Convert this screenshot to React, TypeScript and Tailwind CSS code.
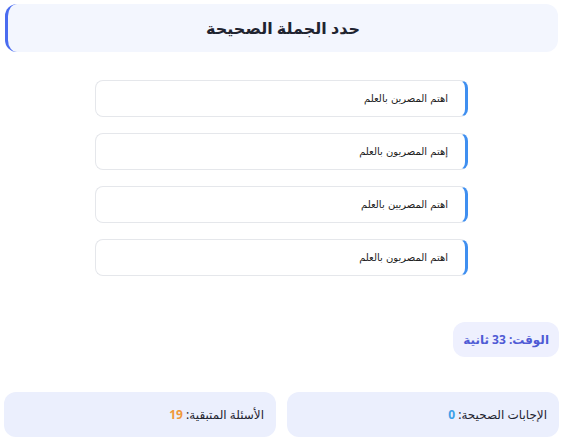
import React from "react";

const options = [
  "اهتم المصرين بالعلم",
  "إهتم المصريون بالعلم",
  "اهتم المصريين بالعلم",
  "اهتم المصريون بالعلم",
];

export default function App() {
  return (
    <div dir="rtl" className="w-[563px] h-[446px] bg-white flex flex-col" style={{ fontFamily: '"Noto Sans", "DejaVu Sans", sans-serif' }}>
      <div className="mx-[5px] mt-[4px] h-[48px] rounded-xl bg-[#f3f6fe] border-l-[3px] border-[#4a6cf0] flex items-center justify-center">
        <span className="text-[16px] font-bold text-[#1f2430]">حدد الجملة الصحيحة</span>
      </div>
      <div className="mt-[28px] mx-auto w-[373px] flex flex-col gap-[16px]">
        {options.map((o, i) => (
          <div key={i} className="h-[37px] rounded-lg border border-[#e5e7eb] border-r-[3px] border-r-[#3f8ff0] bg-white flex items-center pr-[17px]">
            <span className="text-[10px] text-[#222]" style={{ fontFamily: '"DejaVu Sans", "Liberation Sans", sans-serif' }}>{o}</span>
          </div>
        ))}
      </div>
      <div className="mt-[46px] mr-[4px] self-start">
        <div className="h-[35px] px-[10px] rounded-xl bg-[#eef0fe] flex items-center">
          <span className="text-[12px] font-bold text-[#4f5bd5]">الوقت: 33 ثانية</span>
        </div>
      </div>
      <div className="mt-[35px] mx-[4px] grid grid-cols-2 gap-[11px]">
        <div className="h-[45px] rounded-xl bg-[#ebeffd] flex items-center pr-[12px]">
          <span className="text-[12px] text-[#1f2430]">الإجابات الصحيحة: <span className="font-bold text-[#3aa0e8]">0</span></span>
        </div>
        <div className="h-[45px] rounded-xl bg-[#ebeffd] flex items-center pr-[12px]">
          <span className="text-[12px] text-[#1f2430]">الأسئلة المتبقية: <span className="font-bold text-[#f0983a]">19</span></span>
        </div>
      </div>
    </div>
  );
}
